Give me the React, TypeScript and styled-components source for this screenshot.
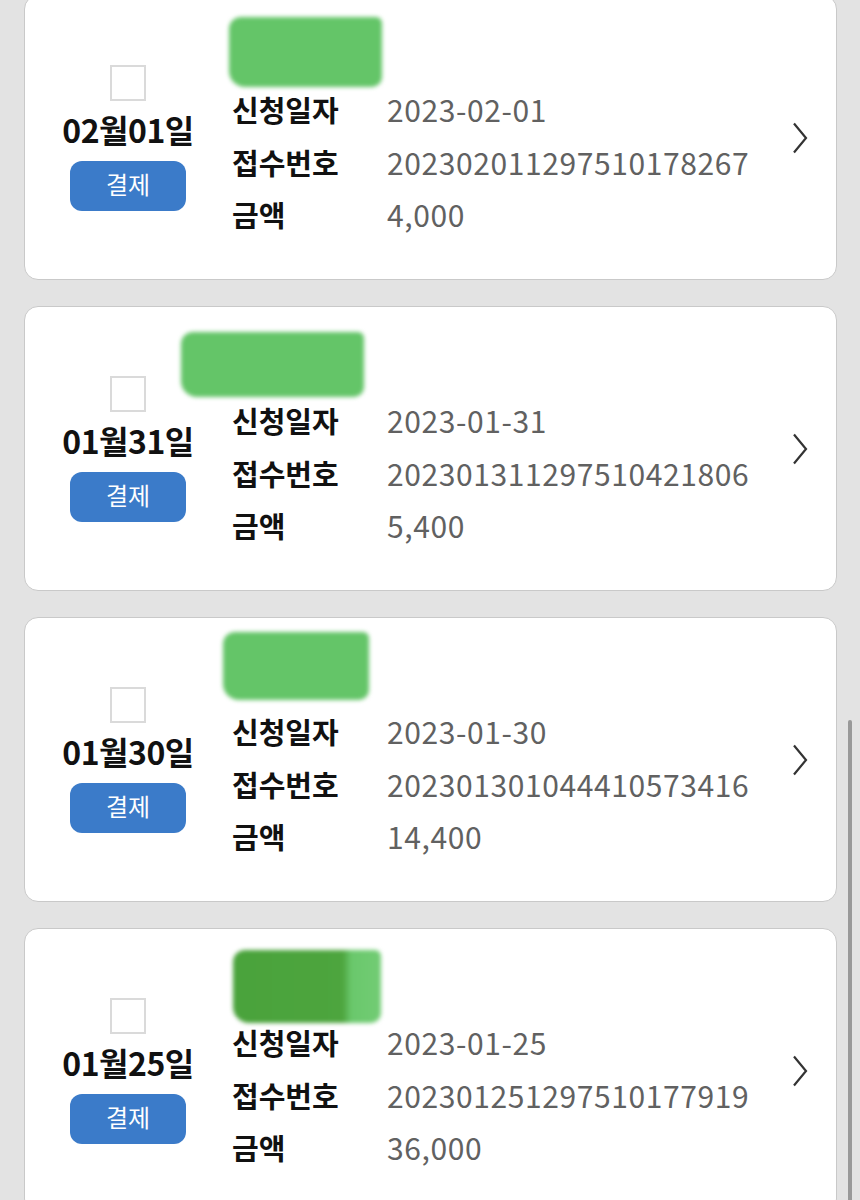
import styled, { createGlobalStyle } from 'styled-components';

type Blob = {
  top: number;
  left: number;
  width: number;
  height: number;
  dark?: boolean;
};

type Item = {
  day: string;
  date: string;
  receipt: string;
  amount: string;
  blob: Blob;
};

const items: Item[] = [
  {
    day: '02월01일',
    date: '2023-02-01',
    receipt: '202302011297510178267',
    amount: '4,000',
    blob: { top: 21, left: 204, width: 153, height: 70 },
  },
  {
    day: '01월31일',
    date: '2023-01-31',
    receipt: '202301311297510421806',
    amount: '5,400',
    blob: { top: 25, left: 156, width: 183, height: 65 },
  },
  {
    day: '01월30일',
    date: '2023-01-30',
    receipt: '202301301044410573416',
    amount: '14,400',
    blob: { top: 14, left: 198, width: 146, height: 68 },
  },
  {
    day: '01월25일',
    date: '2023-01-25',
    receipt: '202301251297510177919',
    amount: '36,000',
    blob: { top: 21, left: 208, width: 148, height: 73, dark: true },
  },
];

const GlobalStyle = createGlobalStyle`
  html, body {
    margin: 0;
    padding: 0;
    background: #e3e3e3;
    font-family: 'Noto Sans CJK KR', 'Noto Sans', sans-serif;
    overflow: hidden;
  }
`;

const Page = styled.div`
  height: 1200px;
  overflow: hidden;
`;

const List = styled.div`
  display: flex;
  flex-direction: column;
  gap: 26px;
  margin-top: -5px;
  padding: 0 23px 0 24px;
`;

const Card = styled.div`
  position: relative;
  box-sizing: border-box;
  height: 285px;
  background: #fff;
  border: 1.5px solid #c9c9c9;
  border-radius: 14px;
  display: flex;
  align-items: center;
  padding: 0 28px 0 27px;
`;

const Side = styled.div`
  width: 152px;
  display: flex;
  flex-direction: column;
  align-items: center;
`;

const Check = styled.div`
  box-sizing: border-box;
  width: 36px;
  height: 36px;
  border: 2px solid #dadada;
  background: #fff;
`;

const Day = styled.div`
  margin-top: 8px;
  font-size: 32px;
  line-height: 40px;
  font-weight: 700;
  color: #111;
  letter-spacing: -0.5px;
`;

const PayButton = styled.button`
  margin-top: 12px;
  width: 116px;
  height: 50px;
  border: none;
  border-radius: 12px;
  background: #3b7bc9;
  color: #fff;
  font-family: inherit;
  font-size: 24px;
  padding: 0 0 5px;
`;

const Info = styled.div`
  align-self: flex-start;
  margin-top: 24px;
  margin-left: 28px;
  display: flex;
  flex-direction: column;
`;

const Title = styled.div`
  height: 63px;
`;

const Fields = styled.div`
  display: grid;
  grid-template-columns: 155px auto;
  grid-auto-rows: 52.5px;
  align-items: center;
`;

const Label = styled.div`
  font-size: 29px;
  font-weight: 700;
  color: #111;
`;

const Value = styled.div`
  font-size: 30px;
  color: #616161;
  letter-spacing: 0.6px;
`;

const Redact = styled.div<{ $top: number; $left: number; $w: number; $h: number; $dark?: boolean }>`
  position: absolute;
  top: ${(p) => p.$top}px;
  left: ${(p) => p.$left}px;
  width: ${(p) => p.$w}px;
  height: ${(p) => p.$h}px;
  border-radius: 12px 6px 10px 16px;
  background: ${(p) =>
    p.$dark
      ? 'linear-gradient(90deg, #4aa33c 0%, #4da53e 74%, #6ac86c 80%, #72cc74 100%)'
      : '#64c568'};
  filter: blur(2px);
`;

const Chevron = styled.svg`
  margin-left: auto;
  width: 16px;
  height: 32px;
  flex-shrink: 0;
`;

const ScrollThumb = styled.div`
  position: fixed;
  right: 8px;
  top: 720px;
  width: 4px;
  height: 490px;
  border-radius: 2px;
  background: #999;
`;

export default function App() {
  return (
    <Page>
      <GlobalStyle />
      <List>
        {items.map((it) => (
          <Card key={it.receipt}>
            <Side>
              <Check />
              <Day>{it.day}</Day>
              <PayButton type="button">결제</PayButton>
            </Side>
            <Info>
              <Title />
              <Fields>
                <Label>신청일자</Label>
                <Value>{it.date}</Value>
                <Label>접수번호</Label>
                <Value>{it.receipt}</Value>
                <Label>금액</Label>
                <Value>{it.amount}</Value>
              </Fields>
            </Info>
            <Chevron viewBox="0 0 16 32">
              <path d="M2 1.5 L14 16 L2 30.5" fill="none" stroke="#333" strokeWidth="2.2" />
            </Chevron>
            <Redact
              $top={it.blob.top}
              $left={it.blob.left}
              $w={it.blob.width}
              $h={it.blob.height}
              $dark={it.blob.dark}
            />
          </Card>
        ))}
      </List>
      <ScrollThumb />
    </Page>
  );
}
